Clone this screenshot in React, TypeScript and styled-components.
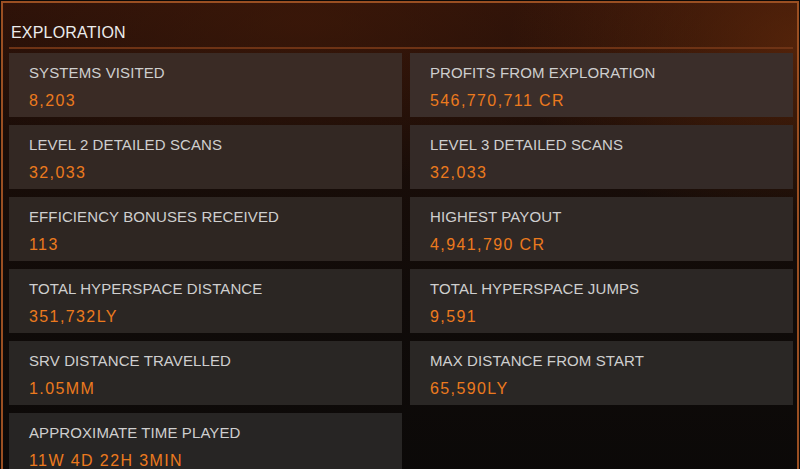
import styled, { createGlobalStyle } from "styled-components";

const Global = createGlobalStyle`
  html, body {
    margin: 0;
    padding: 0;
    background: #0b0908;
  }
`;

const Frame = styled.div`
  box-sizing: border-box;
  width: 800px;
  height: 469px;
  overflow: hidden;
  padding: 1px 1px 0 1px;
  background: #0b0908;
`;

const Panel = styled.div`
  box-sizing: border-box;
  height: 480px;
  border: 2px solid #9a4f22;
  border-bottom: none;
  background:
    radial-gradient(ellipse 420px 260px at 800px 40px, rgba(120, 50, 10, 0.55), transparent 70%),
    radial-gradient(ellipse 500px 200px at 300px 20px, rgba(70, 28, 8, 0.55), transparent 80%),
    linear-gradient(180deg, #2b1109 0px, #1a0d08 140px, #100b09 300px, #0b0908 480px);
  font-family: "Liberation Sans", Arial, sans-serif;
`;

const Header = styled.div`
  margin: 0 4px 0 6px;
  padding: 21px 0 5px 2px;
  border-bottom: 2px solid #6e3315;
  color: #ececec;
  font-size: 16px;
  line-height: 18px;
  letter-spacing: 0.2px;
`;

const Grid = styled.div`
  display: grid;
  grid-template-columns: 393px 383px;
  grid-auto-rows: 64px;
  gap: 8px;
  margin: 4px 0 0 6px;
`;

const Card = styled.div<{ $tone: string }>`
  box-sizing: border-box;
  padding: 11px 0 0 20px;
  background: ${({ $tone }) => $tone};
`;

const Label = styled.div`
  color: #cfcfcf;
  font-size: 15px;
  letter-spacing: 0.1px;
  line-height: 18px;
`;

const Value = styled.div`
  margin-top: 10px;
  color: #ec7a1e;
  font-size: 16px;
  letter-spacing: 1.4px;
  line-height: 18px;
`;

const stats: [string, string, string][] = [
  ["SYSTEMS VISITED", "8,203", "#3a2b25"],
  ["PROFITS FROM EXPLORATION", "546,770,711 CR", "#3b2e2a"],
  ["LEVEL 2 DETAILED SCANS", "32,033", "#332823"],
  ["LEVEL 3 DETAILED SCANS", "32,033", "#342a27"],
  ["EFFICIENCY BONUSES RECEIVED", "113", "#2e2622"],
  ["HIGHEST PAYOUT", "4,941,790 CR", "#2f2825"],
  ["TOTAL HYPERSPACE DISTANCE", "351,732LY", "#2b2623"],
  ["TOTAL HYPERSPACE JUMPS", "9,591", "#2c2725"],
  ["SRV DISTANCE TRAVELLED", "1.05MM", "#292624"],
  ["MAX DISTANCE FROM START", "65,590LY", "#2a2725"],
  ["APPROXIMATE TIME PLAYED", "11W 4D 22H 3MIN", "#272524"],
];

export default function App() {
  return (
    <Frame>
      <Global />
      <Panel>
        <Header>EXPLORATION</Header>
        <Grid>
          {stats.map(([label, value, tone]) => (
            <Card key={label} $tone={tone}>
              <Label>{label}</Label>
              <Value>{value}</Value>
            </Card>
          ))}
        </Grid>
      </Panel>
    </Frame>
  );
}
